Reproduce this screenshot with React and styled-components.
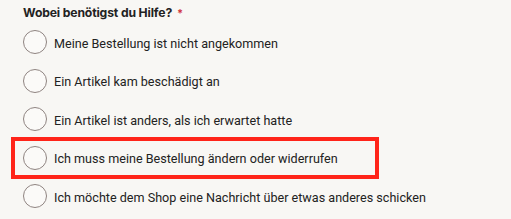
import React from 'react'
import styled, { createGlobalStyle } from 'styled-components'

const GlobalStyle = createGlobalStyle`
	body {
		margin: 0;
		background: #f8f7f4;
		font-family: Roboto, "Liberation Sans", sans-serif;
		color: #222;
	}
`

const Form = styled.fieldset`
	border: 0;
	margin: 0;
	padding: 0 0 0 23px;
`

const Legend = styled.legend`
	padding: 5px 0 0;
	height: 23px;
	box-sizing: border-box;
	font-family: Inter, "Liberation Sans", sans-serif;
	font-size: 12.2px;
	font-weight: 700;
	letter-spacing: -0.15px;
	line-height: 16px;
	color: #222;
`

const Required = styled.span`
	color: #d1363e;
	margin-left: 5px;
	font-size: 11px;
	vertical-align: top;
`

const Options = styled.div`
	display: flex;
	flex-direction: column;
`

const Option = styled.label`
	position: relative;
	display: flex;
	align-items: center;
	gap: 7px;
	height: 38.5px;
	font-size: 12.6px;
	color: #222;
	cursor: pointer;

	${(p) =>
		p.$highlighted &&
		`
		&::after {
			content: '';
			position: absolute;
			left: -12px;
			top: -2px;
			width: 368px;
			height: 42px;
			box-sizing: border-box;
			border: 4px solid #ff2419;
			pointer-events: none;
		}
	`}
`

const OptionText = styled.span`
	padding-top: 2px;
`

const Radio = styled.span`
	flex: none;
	width: 24px;
	height: 24px;
	box-sizing: border-box;
	border-radius: 50%;
	border: 1px solid #8f8481;
	background: #fbfaf8;
`

const options = [
	'Meine Bestellung ist nicht angekommen',
	'Ein Artikel kam beschädigt an',
	'Ein Artikel ist anders, als ich erwartet hatte',
	'Ich muss meine Bestellung ändern oder widerrufen',
	'Ich möchte dem Shop eine Nachricht über etwas anderes schicken',
]

export default function App() {
	return (
		<>
			<GlobalStyle />
			<Form>
				<Legend>
					Wobei benötigst du Hilfe?<Required>*</Required>
				</Legend>
				<Options>
					{options.map((text, i) => (
						<Option key={text} $highlighted={i === 3}>
							<Radio />
							<OptionText>{text}</OptionText>
						</Option>
					))}
				</Options>
			</Form>
		</>
	)
}
